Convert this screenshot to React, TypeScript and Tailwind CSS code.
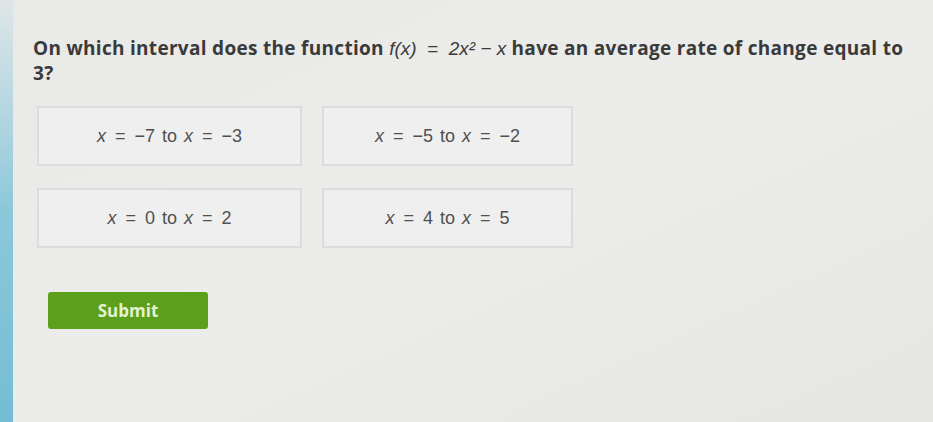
import React from 'react';

interface Choice {
  from: string;
  to: string;
}

const choices: Choice[] = [
  { from: '−7', to: '−3' },
  { from: '−5', to: '−2' },
  { from: '0', to: '2' },
  { from: '4', to: '5' },
];

const Var = () => <span className="italic">x</span>;
const Eq = () => <span className="mx-[9px]">=</span>;

const ChoiceBox: React.FC<{ choice: Choice }> = ({ choice }) => (
  <button
    type="button"
    className="h-[60px] flex items-center justify-center border-2 border-[#dcdcdc] bg-[#efefef] text-[18px] text-[#505050]"
  >
    <span>
      <Var />
      <Eq />
      {choice.from}
      <span className="mx-[7px]">to</span>
      <Var />
      <Eq />
      {choice.to}
    </span>
  </button>
);

export default function App() {
  return (
    <div className="w-[933px] h-[422px] flex overflow-hidden bg-gradient-to-br from-[#e9e9e7] via-[#ececea] to-[#e6e6e4] font-['Liberation_Sans',Arial,sans-serif]">
      {/* left edge of the window */}
      <div className="w-[13px] shrink-0 bg-gradient-to-b from-[#dfe6e8] via-[#8cc8da] to-[#74bdd4]" />

      <div className="flex-1 pl-[20px] pt-[36px]">
        <p className="w-[880px] text-[19px] leading-[24px] font-bold tracking-[0.3px] text-[#3a3a3a] font-['Open_Sans',sans-serif]">
          On which interval does the function <span className="font-normal italic tracking-normal font-['Liberation_Sans',sans-serif]">f(x)&nbsp;&nbsp;=&nbsp;&nbsp;2x²&nbsp;−&nbsp;x</span> have an average rate of change equal to 3?
        </p>

        <div className="mt-[21px] ml-[4px] w-[536px] grid grid-cols-[265px_251px] gap-x-[20px] gap-y-[22px]">
          {choices.map((c, i) => (
            <ChoiceBox key={i} choice={c} />
          ))}
        </div>

        <button
          type="button"
          className="mt-[44px] ml-[15px] w-[160px] h-[37px] rounded-[3px] bg-[#5b9f1d] text-[17px] font-bold text-[#e3f2cf] font-['Open_Sans',sans-serif]"
        >
          Submit
        </button>
      </div>
    </div>
  );
}
